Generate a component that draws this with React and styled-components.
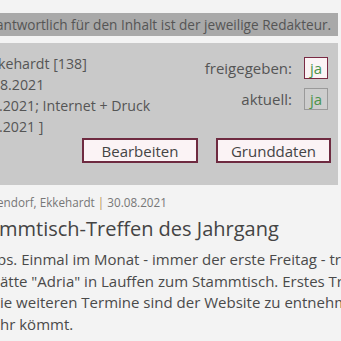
import React from "react";
import styled, { createGlobalStyle } from "styled-components";

const GlobalStyle = createGlobalStyle`
  html, body {
    margin: 0;
    padding: 0;
    background: #f3f3f3;
    font-family: "Open Sans", "Noto Sans", sans-serif;
  }
`;

const Page = styled.div`
  width: 341px;
  height: 341px;
  overflow: hidden;
  padding-top: 13px;
  box-sizing: border-box;
`;

// Zeile, die links vom Fensterrand abgeschnitten ist
const CutLine = styled.div`
  white-space: nowrap;
  margin-left: ${(p) => -(p.$shift || 0)}px;
`;

const Notice = styled.div`
  height: 23px;
  margin-right: 3px;
  background: #a9a9a9;
  color: #555;
  font-size: 13.6px;
  line-height: 23px;
  overflow: hidden;
`;

const Panel = styled.div`
  margin-top: 7px;
  margin-right: 3px;
  height: 142px;
  box-sizing: border-box;
  background: #c9c9c9;
  padding: 10px 7px 0 0;
  display: flex;
  flex-direction: column;
  overflow: hidden;
`;

const PanelTop = styled.div`
  display: flex;
  justify-content: space-between;
  height: 85px;
`;

const Meta = styled.div`
  color: #555;
  font-size: 14.2px;
  line-height: 21px;
`;

const Status = styled.div`
  display: flex;
  flex-direction: column;
  gap: 9px;
  padding-top: 4px;
  padding-right: 3px;
`;

const StatusRow = styled.div`
  display: flex;
  align-items: center;
  justify-content: flex-end;
  gap: 12px;
  color: #555;
  font-size: 15px;
`;

const Flag = styled.span`
  display: inline-block;
  width: 24px;
  height: 22px;
  box-sizing: border-box;
  border: 1px solid ${(p) => (p.$active ? "#7a2a44" : "#9a9a9a")};
  background: ${(p) => (p.$active ? "#fbf3f5" : "#cdcdcd")};
  color: #4a944a;
  font-size: 15px;
  line-height: 20px;
  text-align: center;
`;

const Buttons = styled.div`
  display: flex;
  justify-content: flex-end;
  gap: 18px;
`;

const Button = styled.button`
  width: ${(p) => p.$w}px;
  height: 25px;
  box-sizing: border-box;
  border: 2px solid #6e2a40;
  background: #fbf3f5;
  color: #444;
  font-family: "Open Sans", "Noto Sans", sans-serif;
  font-size: 15px;
  padding: 0;
  cursor: pointer;
`;

const Article = styled.div`
  padding-top: 8px;
  color: #444;
`;

const Byline = styled(CutLine)`
  font-size: 11.7px;
  line-height: 18px;
  color: #777;
`;

const Pipe = styled.span`
  color: #b58a55;
`;

const Title = styled(CutLine)`
  margin-top: 5px;
  font-size: 20px;
  line-height: 26px;
  color: #444;
`;

const Body = styled.div`
  margin-top: 7px;
  font-size: 15px;
  line-height: 21.5px;
  color: #4a4a4a;
`;

export default function App() {
  return (
    <>
      <GlobalStyle />
      <Page>
        <Notice>
          <CutLine $shift={4}>
            antwortlich für den Inhalt ist der jeweilige Redakteur.
          </CutLine>
        </Notice>

        <Panel>
          <PanelTop>
            <Meta>
              <CutLine $shift={2}>kehardt [138]</CutLine>
              <CutLine $shift={0}>8.2021</CutLine>
              <CutLine $shift={1}>.2021; Internet + Druck</CutLine>
              <CutLine $shift={1}>.2021 ]</CutLine>
            </Meta>
            <Status>
              <StatusRow>
                freigegeben:
                <Flag $active>ja</Flag>
              </StatusRow>
              <StatusRow>
                aktuell:
                <Flag>ja</Flag>
              </StatusRow>
            </Status>
          </PanelTop>
          <Buttons>
            <Button $w={116}>Bearbeiten</Button>
            <Button $w={115}>Grunddaten</Button>
          </Buttons>
        </Panel>

        <Article>
          <Byline $shift={3}>
            endorf, Ekkehardt <Pipe>|</Pipe> 30.08.2021
          </Byline>
          <Title $shift={1}>mmtisch-Treffen des Jahrgang</Title>
          <Body>
            <CutLine $shift={3}>ps. Einmal im Monat - immer der erste Freitag - trifft</CutLine>
            <CutLine $shift={0}>ätte "Adria" in Lauffen zum Stammtisch. Erstes Treffen</CutLine>
            <CutLine $shift={0}>ie weiteren Termine sind der Website zu entnehmen</CutLine>
            <CutLine $shift={0}>hr kömmt.</CutLine>
          </Body>
        </Article>
      </Page>
    </>
  );
}
